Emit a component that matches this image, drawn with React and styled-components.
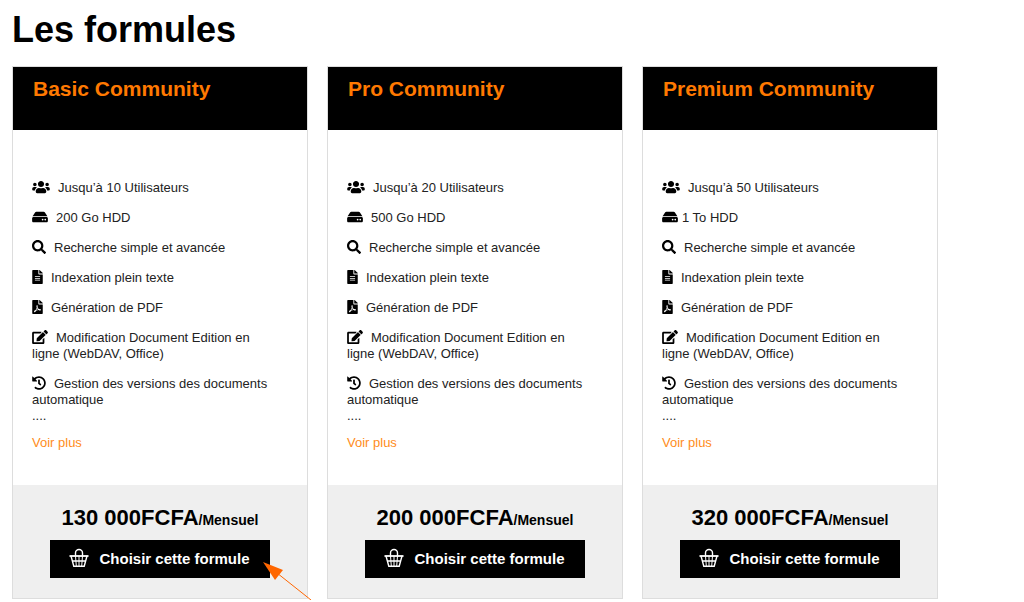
import styled, { createGlobalStyle } from 'styled-components'
import { FaUsers, FaHdd, FaSearch, FaFileAlt, FaFilePdf, FaEdit, FaHistory } from 'react-icons/fa'

const GlobalStyle = createGlobalStyle`
    * {
        box-sizing: border-box;
    }
    body {
        margin: 0;
        background: #fff;
        color: #000;
        font-family: 'Liberation Sans', Arial, sans-serif;
    }
`

const Page = styled.main`
    padding: 9px 86px 3px 12px;
`

const Title = styled.h1`
    margin: 0 0 15px;
    font-size: 36px;
    line-height: 42px;
`

const Cards = styled.div`
    display: grid;
    grid-template-columns: repeat(3, 1fr);
    gap: 19px;
`

const Card = styled.section`
    display: flex;
    flex-direction: column;
    border: 1px solid #ddd;
`

const CardHeader = styled.header`
    padding: 8px 20px 28px;
    background: #000;
`

const CardTitle = styled.h2`
    margin: 0;
    color: #ff7900;
    font-size: 21px;
    line-height: 27px;
`

const CardBody = styled.div`
    flex: 1;
    padding: 50px 28px 34px 19px;
    font-size: 13px;
    line-height: 16px;
    color: #222;
`

const Features = styled.ul`
    margin: 0;
    padding: 0;
    list-style: none;
`

const Feature = styled.li`
    margin-bottom: 14px;

    &:last-child {
        margin-bottom: 0;
    }
    svg {
        width: ${(props) => props.$icon}px;
        height: 14px;
        margin-right: ${(props) => (props.$tight ? 4 : 8)}px;
        vertical-align: -2px;
        color: #000;
    }
`

const More = styled.div`
    margin-bottom: 11px;
`

const MoreLink = styled.a`
    color: #ff8c1a;
    text-decoration: none;
`

const CardFooter = styled.footer`
    display: flex;
    flex-direction: column;
    align-items: center;
    padding: 20px 16px;
    background: #efefef;
`

const Price = styled.p`
    margin: 0 0 7px;
    font-size: 22px;
    font-weight: bold;
    line-height: 26px;
`

const Period = styled.span`
    font-size: 14px;
`

const Action = styled.div`
    position: relative;
`

const ChooseButton = styled.button`
    display: flex;
    align-items: center;
    gap: 10px;
    height: 38px;
    padding: 0 20px 2px 19px;
    border: 0;
    background: #000;
    color: #fff;
    font-family: inherit;
    font-size: 15px;
    font-weight: bold;
    white-space: nowrap;
    cursor: pointer;
`

const Pointer = styled.svg`
    position: absolute;
    top: 22px;
    left: calc(100% - 7px);
    pointer-events: none;
`

const plans = [
    { name: 'Basic Community', users: 10, disk: '200 Go', price: '130 000', pointed: true },
    { name: 'Pro Community', users: 20, disk: '500 Go', price: '200 000' },
    { name: 'Premium Community', users: 50, disk: '1 To', price: '320 000', tightDisk: true },
]

function BasketIcon() {
    return (
        <svg width="20" height="20" viewBox="0 0 20 20" fill="none" stroke="#fff" strokeWidth="1.4" aria-hidden="true">
            <path d="M6.5 9V5a3.5 3.5 0 0 1 7 0V9" />
            <path d="M0.5 8h19" strokeWidth="1.8" />
            <path d="M2 8l2.8 10.3h10.4L18 8M3 13h14" />
            <path d="M6.5 8l.8 10M13.5 8l-.8 10M10 8v10" strokeWidth="1" />
        </svg>
    )
}

function Plan({ plan }) {
    return (
        <Card>
            <CardHeader>
                <CardTitle>{plan.name}</CardTitle>
            </CardHeader>
            <CardBody>
                <Features>
                    <Feature $icon={18}><FaUsers />Jusqu’à {plan.users} Utilisateurs</Feature>
                    <Feature $icon={16} $tight={plan.tightDisk}><FaHdd />{plan.disk} HDD</Feature>
                    <Feature $icon={14}><FaSearch />Recherche simple et avancée</Feature>
                    <Feature $icon={11}><FaFileAlt />Indexation plein texte</Feature>
                    <Feature $icon={11}><FaFilePdf />Génération de PDF</Feature>
                    <Feature $icon={16}><FaEdit />Modification Document Edition en ligne (WebDAV, Office)</Feature>
                    <Feature $icon={14}><FaHistory />Gestion des versions des documents automatique</Feature>
                </Features>
                <More>....</More>
                <MoreLink href="#">Voir plus</MoreLink>
            </CardBody>
            <CardFooter>
                <Price>{plan.price}FCFA<Period>/Mensuel</Period></Price>
                <Action>
                    <ChooseButton type="button">
                        <BasketIcon />
                        Choisir cette formule
                    </ChooseButton>
                    {plan.pointed && (
                        <Pointer width="49" height="38" viewBox="0 0 49 38" aria-hidden="true">
                            <path d="M14 11L48 38" stroke="#ff6600" strokeWidth="1" />
                            <path d="M0 0L20 8L12 18Z" fill="#ff6600" />
                        </Pointer>
                    )}
                </Action>
            </CardFooter>
        </Card>
    )
}

export default function App() {
    return (
        <>
            <GlobalStyle />
            <Page>
                <Title>Les formules</Title>
                <Cards>
                    {plans.map((plan) => <Plan key={plan.name} plan={plan} />)}
                </Cards>
            </Page>
        </>
    )
}
